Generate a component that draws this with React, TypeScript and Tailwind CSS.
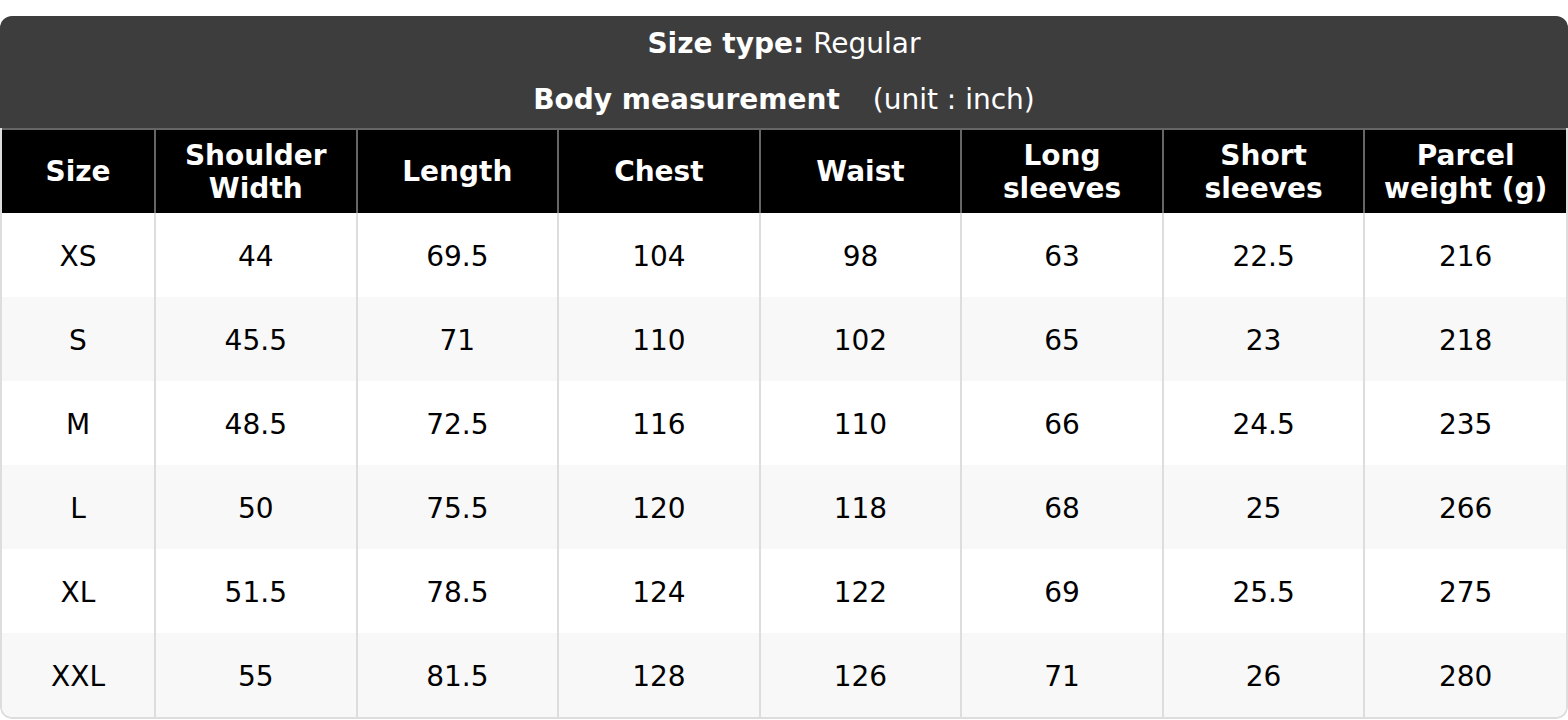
import React from "react"

const headers = [
  ["Size"],
  ["Shoulder", "Width"],
  ["Length"],
  ["Chest"],
  ["Waist"],
  ["Long", "sleeves"],
  ["Short", "sleeves"],
  ["Parcel", "weight (g)"],
]

const rows = [
  ["XS", "44", "69.5", "104", "98", "63", "22.5", "216"],
  ["S", "45.5", "71", "110", "102", "65", "23", "218"],
  ["M", "48.5", "72.5", "116", "110", "66", "24.5", "235"],
  ["L", "50", "75.5", "120", "118", "68", "25", "266"],
  ["XL", "51.5", "78.5", "124", "122", "69", "25.5", "275"],
  ["XXL", "55", "81.5", "128", "126", "71", "26", "280"],
]

export default function App() {
  return (
    <div className="bg-white pt-4 font-['DejaVu_Sans',sans-serif] text-[28px] text-black">
      <div className="overflow-hidden rounded-[12px]">
        <div className="bg-[#3d3d3d] text-white text-center">
          <div className="h-[56px] flex items-center justify-center">
            <span className="font-bold">Size type:</span>
            <span className="ml-[9px]">Regular</span>
          </div>
          <div className="h-[56px] flex items-center justify-center">
            <span className="font-bold">Body measurement</span>
            <span className="ml-[33px]">(unit : inch)</span>
          </div>
        </div>
        <div className="overflow-hidden rounded-b-[12px] border-x-2 border-b-2 border-[#dddddd]">
          <table className="w-full table-fixed border-collapse text-center">
            <colgroup>
              <col className="w-[153px]" />
            </colgroup>
            <thead>
              <tr className="h-[84px] bg-black text-white">
                {headers.map((h, i) => (
                  <th
                    key={i}
                    className="border-2 border-[#666666] border-b-0 font-bold leading-[33px] first:border-l-0 last:border-r-0"
                  >
                    {h.map((line, j) => (
                      <div key={j}>{line}</div>
                    ))}
                  </th>
                ))}
              </tr>
            </thead>
            <tbody>
              {rows.map((r, i) => (
                <tr key={i} className={`h-[84px] ${i % 2 === 1 ? "bg-[#f8f8f8]" : "bg-white"}`}>
                  {r.map((c, j) => (
                    <td
                      key={j}
                      className="border-x-2 border-[#dddddd] pt-[4px] first:border-l-0 last:border-r-0"
                    >
                      {c}
                    </td>
                  ))}
                </tr>
              ))}
            </tbody>
          </table>
        </div>
      </div>
    </div>
  )
}
